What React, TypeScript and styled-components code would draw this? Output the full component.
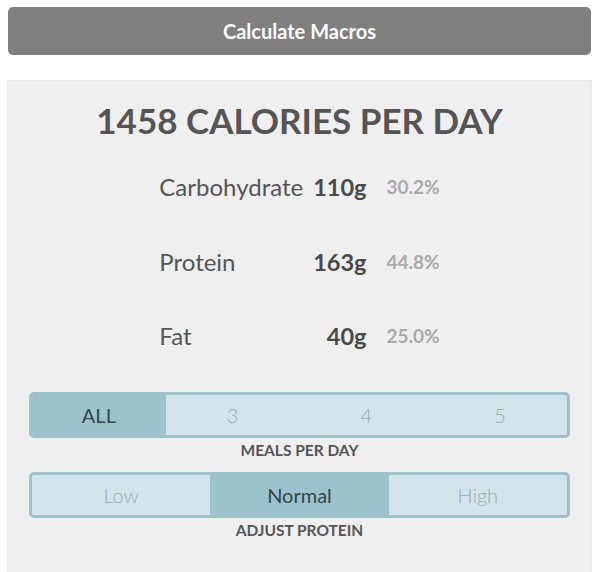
import React from "react";
import styled, { createGlobalStyle } from "styled-components";

const Global = createGlobalStyle`
  html, body { margin: 0; padding: 0; background: #ffffff; }
  body { font-family: Lato, "Open Sans", sans-serif; }
`;

const Page = styled.div`
  width: 585px;
  padding: 7px 0 0 7px;
  display: flex;
  flex-direction: column;
`;

const CalcButton = styled.button`
  margin: 0 1px;
  height: 48px;
  border: none;
  border-radius: 5px;
  background: #808080;
  color: #ffffff;
  font-family: Lato, sans-serif;
  font-weight: 700;
  font-size: 20px;
  cursor: pointer;
`;

const Panel = styled.section`
  margin-top: 25px;
  background: #efefef;
  border: 1px solid #e9e9e9;
  border-bottom: none;
  height: 492px;
  box-sizing: border-box;
  padding: 0 21px;
  display: flex;
  flex-direction: column;
  align-items: stretch;
`;

const Title = styled.h1`
  margin: 19px 0 0;
  text-align: center;
  font-family: Lato, sans-serif;
  font-weight: 700;
  font-size: 35px;
  line-height: 41px;
  color: #555555;
`;

const MacroGrid = styled.div`
  margin: 31px 0 41px;
  display: grid;
  grid-template-columns: auto auto auto;
  grid-auto-rows: 30px;
  row-gap: 44.5px;
  justify-content: center;
  align-items: center;
`;

const Label = styled.div`
  font-size: 24px;
  line-height: 30px;
  color: #555555;
  padding-right: 10px;
`;

const Grams = styled.div`
  font-size: 23.5px;
  line-height: 30px;
  font-weight: 700;
  color: #4a4a4a;
  text-align: right;
`;

const Percent = styled.div`
  font-size: 19px;
  line-height: 30px;
  font-weight: 700;
  color: #aaaaaa;
  padding-left: 20px;
`;

const Segmented = styled.div<{ $cols: number }>`
  display: grid;
  grid-template-columns: repeat(${(p) => p.$cols}, 1fr);
  height: 46px;
  box-sizing: border-box;
  border: 3px solid #9cc3cc;
  border-radius: 5px;
  background: #d2e4e9;
  overflow: hidden;
`;

const Segment = styled.div<{ $active?: boolean }>`
  display: flex;
  align-items: center;
  justify-content: center;
  font-size: 20px;
  font-weight: ${(p) => (p.$active ? 400 : 300)};
  color: ${(p) => (p.$active ? "#34474b" : "#98acb1")};
  background: ${(p) => (p.$active ? "#9cc3cc" : "transparent")};
`;

const Caption = styled.div`
  text-align: center;
  font-size: 15.5px;
  font-weight: 700;
  line-height: 20px;
  color: #555555;
  margin: 2px 0 12px;
`;

const macros = [
  { name: "Carbohydrate", g: "110g", pct: "30.2%" },
  { name: "Protein", g: "163g", pct: "44.8%" },
  { name: "Fat", g: "40g", pct: "25.0%" },
];

export default function App() {
  return (
    <>
      <Global />
      <Page>
        <CalcButton>Calculate Macros</CalcButton>
        <Panel>
          <Title>1458 CALORIES PER DAY</Title>
          <MacroGrid>
            {macros.map((m) => (
              <React.Fragment key={m.name}>
                <Label>{m.name}</Label>
                <Grams>{m.g}</Grams>
                <Percent>{m.pct}</Percent>
              </React.Fragment>
            ))}
          </MacroGrid>
          <Segmented $cols={4}>
            <Segment $active>ALL</Segment>
            <Segment>3</Segment>
            <Segment>4</Segment>
            <Segment>5</Segment>
          </Segmented>
          <Caption>MEALS PER DAY</Caption>
          <Segmented $cols={3}>
            <Segment>Low</Segment>
            <Segment $active>Normal</Segment>
            <Segment>High</Segment>
          </Segmented>
          <Caption>ADJUST PROTEIN</Caption>
        </Panel>
      </Page>
    </>
  );
}
